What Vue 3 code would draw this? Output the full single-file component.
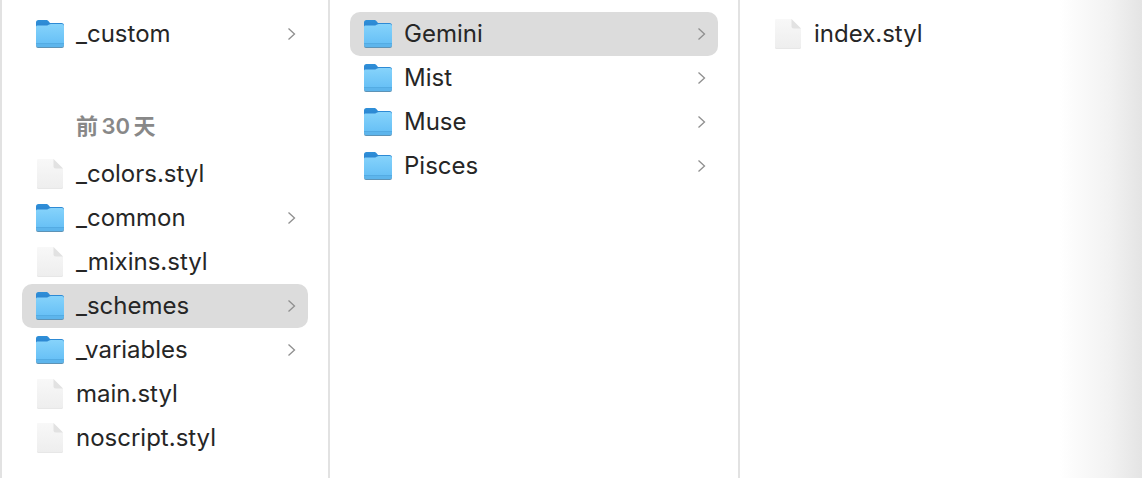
<script setup>
const first = [
  { name: '_custom', folder: true },
  { label: '前 30 天' },
  { name: '_colors.styl' },
  { name: '_common', folder: true },
  { name: '_mixins.styl' },
  { name: '_schemes', folder: true, selected: true },
  { name: '_variables', folder: true },
  { name: 'main.styl' },
  { name: 'noscript.styl' }
]
const second = [
  { name: 'Gemini', folder: true, selected: true },
  { name: 'Mist', folder: true },
  { name: 'Muse', folder: true },
  { name: 'Pisces', folder: true }
]
const third = [{ name: 'index.styl' }]
const columns = [
  { id: 'first', items: first },
  { id: 'second', items: second },
  { id: 'third', items: third }
]
</script>

<template>
  <div class="finder">
    <svg class="defs" width="0" height="0">
      <defs>
        <linearGradient id="tab" x1="0" y1="0" x2="0" y2="1">
          <stop offset="0" stop-color="#2f8fd8" />
          <stop offset="1" stop-color="#2a82cf" />
        </linearGradient>
        <linearGradient id="body" x1="0" y1="0" x2="0" y2="1">
          <stop offset="0" stop-color="#86d3fb" />
          <stop offset="1" stop-color="#62bdf5" />
        </linearGradient>
        <linearGradient id="page" x1="0" y1="0" x2="0" y2="1">
          <stop offset="0" stop-color="#f8f8f8" />
          <stop offset="1" stop-color="#eeeeee" />
        </linearGradient>
      </defs>
    </svg>
    <div v-for="col in columns" :key="col.id" class="column" :class="col.id">
      <template v-for="item in col.items" :key="item.name || item.label">
        <div v-if="item.label" class="label">{{ item.label }}</div>
        <div v-else class="row" :class="{ selected: item.selected }">
          <svg v-if="item.folder" class="icon" viewBox="0 0 30 28" width="30" height="28">
            <path d="M2 8V2.500A2.500 2.500 0 0 1 4.500 0H12c1.500 0 2.200.6 3 1.700l1 1.300h11.500A2.500 2.500 0 0 1 30 5.500V9H2z" fill="url(#tab)" />
            <path d="M2 7c0-1 .6-1.500 1.500-1.500H12c1.600 0 2.400-.5 3.200-1 .5-.3 1-.5 1.600-.5h11c1.300 0 2.200.9 2.200 2.200V25a2 2 0 0 1-2 2H4a2 2 0 0 1-2-2z" fill="url(#body)" />
            <path d="M2 23h28v2a2 2 0 0 1-2 2H4a2 2 0 0 1-2-2z" fill="#5db5ec" />
            <path d="M2 23h28v.6H2z" fill="#4fa6de" />
            <path d="M2 25.200a2 2 0 0 0 2 1.800h24a2 2 0 0 0 2-1.800v.8a2 2 0 0 1-2 2H4a2 2 0 0 1-2-2z" fill="#5d93b6" />
          </svg>
          <svg v-else class="icon" viewBox="0 0 30 30" width="30" height="30">
            <path d="M3 1a1 1 0 0 1 1-1h15.500L29 9.500V28a1 1 0 0 1-1 1H4a1 1 0 0 1-1-1z" fill="url(#page)" />
            <path d="M3 28a1 1 0 0 0 1 1h24a1 1 0 0 0 1-1v.6a1 1 0 0 1-1 1H4a1 1 0 0 1-1-1z" fill="#cfcfcf" />
            <path d="M19.500 0v7.500a2 2 0 0 0 2 2H29z" fill="#e2e2e2" />
          </svg>
          <span class="name">{{ item.name }}</span>
          <svg v-if="item.folder" class="chevron" viewBox="0 0 9 14" width="9" height="14">
            <path d="M1.500 1.500 7.500 7l-6 5.500" fill="none" stroke="#8f8f8f" stroke-width="1.300" />
          </svg>
        </div>
      </template>
    </div>
  </div>
</template>

<style scoped>
.finder {
  display: grid;
  grid-template-columns: 326px 408px 1fr;
  column-gap: 2px;
  height: 478px;
  padding-left: 2px;
  box-sizing: border-box;
  background: #e2e2e2;
  font-family: Inter, "Noto Sans CJK SC", sans-serif;
  color: #262626;
  overflow: hidden;
}
.defs {
  position: absolute;
}
.column {
  background: #fff;
  padding: 12px 20px 0;
}
.third {
  padding: 12px 0 0 20px;
  background: linear-gradient(to right, #fff 0, #fff 320px, #f2f2f2 370px, #e4e4e4 402px);
}
.row {
  display: flex;
  align-items: center;
  height: 44px;
  padding: 0 12px;
  border-radius: 10px;
}
.row.selected {
  background: #dcdcdc;
}
.icon {
  flex: none;
  margin-right: 12px;
}
.name {
  flex: 1;
  font-size: 24px;
  margin-bottom: 2px;
}
.chevron {
  flex: none;
}
.label {
  height: 44px;
  margin: 46px 0 6px;
  padding-left: 54px;
  display: flex;
  align-items: center;
  font-size: 22px;
  font-weight: 600;
  word-spacing: -2px;
  color: #888;
}
</style>
